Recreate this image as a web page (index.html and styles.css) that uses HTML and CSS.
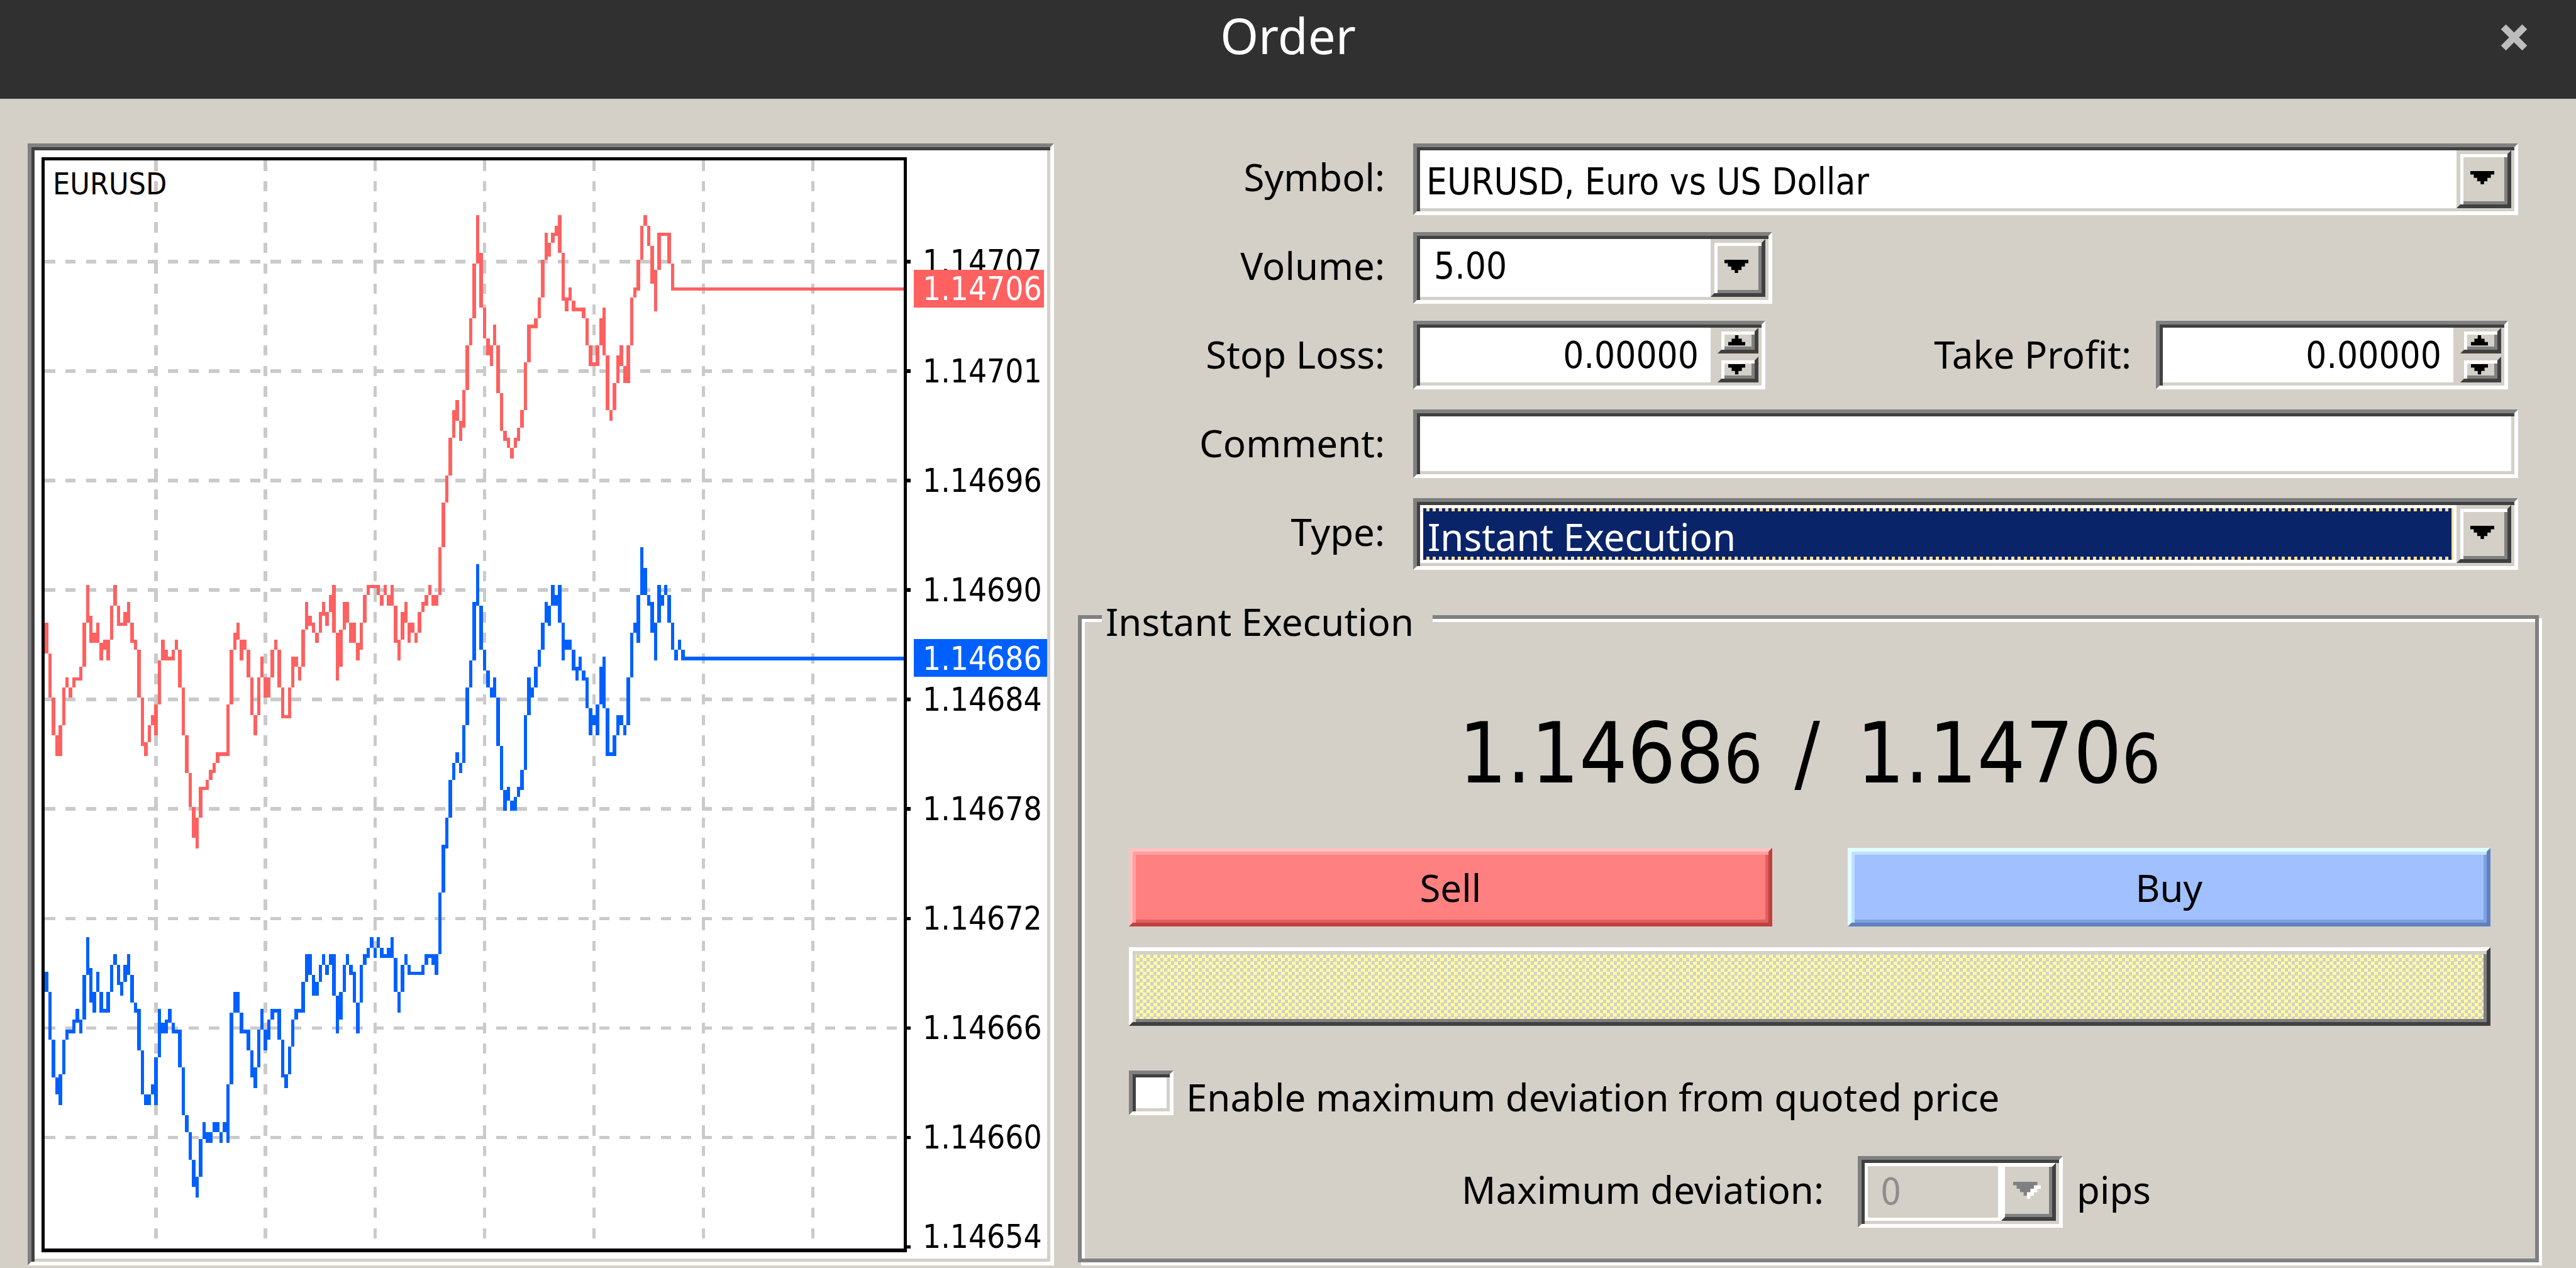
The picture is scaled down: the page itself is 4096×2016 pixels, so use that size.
FILE: index.html
```html
<!DOCTYPE html>
<html lang="en">
<head>
<meta charset="utf-8">
<title>Order</title>
<link rel="stylesheet" href="styles.css">
</head>
<body>
<header class="titlebar">
  <h1 class="title">Order</h1>
  <button class="close" type="button" aria-label="Close">
    <svg viewBox="0 0 8 8" aria-hidden="true"><path d="M1 1L7 7M7 1L1 7"/></svg>
  </button>
</header>
<main class="dialog">
  <section class="chart sunken" aria-label="EURUSD tick chart">
    <svg class="plot" viewBox="0 0 1610 1762">
      <g transform="scale(5.44) translate(-10 -44)" shape-rendering="crispEdges">
        <path class="grid" d="M13 76.500H264M13 108.500H264M13 140.500H264M13 172.500H264M13 204.500H264M13 236.500H264M13 268.500H264M13 300.500H264M13 332.500H264M45.500 47V365M77.500 47V365M109.500 47V365M141.500 47V365M173.500 47V365M205.500 47V365M237.500 47V365"/>
        <path class="ask" id="ask"/>
        <path class="bid" id="bid"/>
        <path class="frame" d="M12.500 46.500H264.500V365.500H12.500ZM265 76.500H266M265 108.500H266M265 140.500H266M265 172.500H266M265 204.500H266M265 236.500H266M265 268.500H266M265 300.500H266M265 332.500H266M265 364.500H266"/>
      </g>
      <text class="symbol" x="29" y="70">EURUSD</text>
      <g class="scale">
        <text x="1412" y="195">1.14707</text>
        <text x="1412" y="369">1.14701</text>
        <text x="1412" y="543">1.14696</text>
        <text x="1412" y="717">1.14690</text>
        <text x="1412" y="891">1.14684</text>
        <text x="1412" y="1065">1.14678</text>
        <text x="1412" y="1239">1.14672</text>
        <text x="1412" y="1413">1.14666</text>
        <text x="1412" y="1587">1.14660</text>
        <text x="1412" y="1745">1.14654</text>
      </g>
      <rect class="ask-tag" x="1398" y="190" width="207" height="60"/>
      <rect class="bid-tag" x="1398" y="777" width="212" height="60"/>
      <g class="tags">
        <text x="1412" y="238">1.14706</text>
        <text x="1412" y="826">1.14686</text>
      </g>
    </svg>
  </section>

  <form class="order">
    <div class="fields">
      <label for="symbol">Symbol:</label>
      <div class="combo sunken">
        <select id="symbol"><option>EURUSD, Euro vs US Dollar</option></select>
        <span class="drop raised"><svg viewBox="0 0 7 4"><path d="M0 0H7V1H6V2H5V3H4V4H3V3H2V2H1V1H0Z"/></svg></span>
      </div>

      <label for="volume">Volume:</label>
      <div class="combo sunken volume">
        <input id="volume" type="text" value="5.00">
        <button class="drop raised" type="button" aria-label="Choose volume"><svg viewBox="0 0 7 4"><path d="M0 0H7V1H6V2H5V3H4V4H3V3H2V2H1V1H0Z"/></svg></button>
      </div>

      <label for="stop">Stop Loss:</label>
      <div class="levels">
        <div class="spin sunken">
          <input id="stop" type="text" value="0.00000">
          <div class="arrows">
            <button class="raised" type="button" aria-label="Raise stop loss"><svg viewBox="0 0 5 3"><path d="M2 0H3V1H4V2H5V3H0V2H1V1H2Z"/></svg></button>
            <button class="raised" type="button" aria-label="Lower stop loss"><svg viewBox="0 0 5 3"><path d="M0 0H5V1H4V2H3V3H2V2H1V1H0Z"/></svg></button>
          </div>
        </div>
        <label for="profit">Take Profit:</label>
        <div class="spin sunken">
          <input id="profit" type="text" value="0.00000">
          <div class="arrows">
            <button class="raised" type="button" aria-label="Raise take profit"><svg viewBox="0 0 5 3"><path d="M2 0H3V1H4V2H5V3H0V2H1V1H2Z"/></svg></button>
            <button class="raised" type="button" aria-label="Lower take profit"><svg viewBox="0 0 5 3"><path d="M0 0H5V1H4V2H3V3H2V2H1V1H0Z"/></svg></button>
          </div>
        </div>
      </div>

      <label for="comment">Comment:</label>
      <div class="comment sunken"><input id="comment" type="text"></div>

      <label for="type">Type:</label>
      <div class="combo sunken active">
        <div class="focus"><select id="type"><option>Instant Execution</option></select></div>
        <span class="drop raised"><svg viewBox="0 0 7 4"><path d="M0 0H7V1H6V2H5V3H4V4H3V3H2V2H1V1H0Z"/></svg></span>
      </div>
    </div>

    <fieldset class="execution">
      <legend>Instant Execution</legend>
      <p class="quote">1.1468<small>6</small> <span class="slash">/</span> 1.1470<small>6</small></p>
      <div class="trade">
        <button class="sell" type="button">Sell</button>
        <button class="buy" type="button">Buy</button>
      </div>
      <div class="notice"></div>
      <div class="check">
        <input id="limit" class="sunken" type="checkbox">
        <label for="limit">Enable maximum deviation from quoted price</label>
      </div>
      <div class="deviation">
        <label for="deviation">Maximum deviation:</label>
        <div class="combo sunken disabled">
          <input id="deviation" type="text" value="0" disabled>
          <button class="drop raised" type="button" aria-label="Choose deviation" disabled><svg viewBox="0 0 8 5"><path class="glint" d="M1 1H8V2H7V3H6V4H5V5H4V4H3V3H2V2H1Z"/><path d="M0 0H7V1H6V2H5V3H4V4H3V3H2V2H1V1H0Z"/></svg></button>
        </div>
        <span>pips</span>
      </div>
    </fieldset>
  </form>
</main>
<script src="chart.js"></script>
</body>
</html>
```
FILE: styles.css
```css
:root {
  --face: #d4d0c8;
  --light: #ffffff;
  --shade: #808080;
  --dark: #404040;
  --label-font: "Noto Sans", sans-serif;
  --value-font: "DejaVu Sans Condensed", "DejaVu Sans", sans-serif;
}

* {
  box-sizing: border-box;
}

body {
  margin: 0;
  min-height: 100vh;
  display: flex;
  flex-direction: column;
  background: var(--face);
  color: #000;
  font: 60px/70px var(--label-font);
}

input,
select,
button {
  margin: 0;
  padding: 0;
  border: 0;
  border-radius: 0;
  background: none;
  color: inherit;
  font: inherit;
  appearance: none;
  outline: 0;
  min-width: 0;
}

/* Title bar */

.titlebar {
  display: grid;
  grid-template-columns: 1fr auto 1fr;
  align-items: start;
  height: 157px;
  padding: 0 76px;
  background: #303030;
}

.title {
  grid-column: 2;
  margin: 0;
  padding-top: 1px;
  color: #fff;
  font: 400 78px/110px var(--label-font);
}

.close {
  justify-self: end;
  margin-top: 37px;
  width: 45px;
  height: 45px;
}

.close svg {
  display: block;
  fill: none;
  stroke: #bdbdbd;
  stroke-width: 2;
}

/* Bevels */

.sunken {
  border: 6px solid;
  border-color: var(--shade) var(--light) var(--light) var(--shade);
  box-shadow: inset 5px 5px 0 var(--dark), inset -5px -5px 0 var(--face);
  padding: 5px;
  background: #fff;
}

.raised {
  border: 6px solid;
  border-color: var(--face) var(--dark) var(--dark) var(--face);
  box-shadow: inset 5px 5px 0 var(--light), inset -5px -5px 0 var(--shade);
  background: var(--face);
}

/* Layout */

.dialog {
  flex: 1;
  display: grid;
  grid-template-columns: 1632fr 2328fr;
  gap: 38px;
  padding: 71px 54px 4px 44px;
}

.order {
  display: flex;
  flex-direction: column;
}

/* Chart */

.chart {
  min-width: 0;
  font-family: var(--value-font);
  font-stretch: condensed;
}

.plot {
  display: block;
  width: 100%;
}

.plot path {
  fill: none;
  stroke-width: 1;
}

.plot .grid {
  stroke: #cacaca;
  stroke-dasharray: 3 3;
}

.plot .frame {
  stroke: #000;
}

.plot .ask {
  stroke: #ff6060;
}

.plot .bid {
  stroke: #0060ff;
}

.ask-tag {
  fill: #ff6060;
}

.bid-tag {
  fill: #0060ff;
}

.symbol {
  font-size: 48px;
}

.scale,
.tags {
  font-size: 51px;
}

.tags {
  fill: #fff;
}

/* Order fields */

.fields {
  display: grid;
  grid-template-columns: 488px 1fr;
  column-gap: 45px;
  row-gap: 27px;
  grid-auto-rows: 114px;
  align-items: start;
  padding-right: 38px;
}

.fields label {
  padding-top: 18px;
  text-align: right;
}

.combo {
  display: flex;
  height: 114px;
}

.combo select,
.combo input,
.spin input,
.comment input {
  flex: 1;
  font-family: var(--value-font);
  font-size: 58px;
  font-stretch: condensed;
}

.combo select {
  padding: 8px 0 0 10px;
}

.drop {
  flex: none;
  display: grid;
  place-content: center;
  width: 87px;
  padding: 0 5px 5px 0;
}

.drop svg {
  display: block;
  width: 38px;
}

.volume {
  width: 571px;
}

.combo input {
  padding: 0 0 7px 22px;
}

.levels {
  display: flex;
  padding-right: 16px;
}

.levels label {
  margin-left: auto;
  margin-right: 39px;
}

.spin {
  display: flex;
  width: 560px;
  height: 109px;
}

.spin input {
  padding-right: 19px;
  text-align: right;
}

.arrows {
  flex: none;
  display: flex;
  flex-direction: column;
  gap: 5px;
  width: 76px;
  padding: 0 0 0 11px;
  background: var(--face);
}

.arrows button {
  flex: 1;
  display: grid;
  place-content: center;
  padding-right: 5px;
}

.arrows svg {
  display: block;
  width: 27px;
}

.comment {
  display: flex;
  height: 109px;
}

.focus {
  flex: 1;
  display: flex;
  margin: 5px;
  padding: 5px;
  background: repeating-linear-gradient(90deg, #0a246a 0 5px, #f5db95 5px 10px);
}

.focus select {
  padding: 5px 0 0 2px;
  background: #0a246a;
  color: #fff;
  font-family: var(--label-font);
  font-size: 60px;
}

/* Execution group */

.execution {
  flex: 1;
  min-width: 0;
  margin: 33px 5px 5px 0;
  padding: 0 71px 40px 75px;
  border: 6px solid var(--shade);
  box-shadow: inset 5px 5px 0 var(--light), 5px 5px 0 var(--light);
}

.execution legend {
  margin-left: -43px;
  padding: 14px 30px 0 6px;
  background: var(--face);
}

.quote {
  margin: 95px 0 70px;
  font-family: var(--value-font);
  font-size: 134px;
  font-stretch: condensed;
  line-height: 160px;
  text-align: center;
}

.quote small {
  font-size: 108px;
  line-height: 1;
}

.slash {
  margin: 0 20px 0 12px;
}

.trade {
  display: grid;
  grid-template-columns: 1fr 1fr;
  gap: 120px;
}

.trade button {
  height: 125px;
  border-width: 6px;
  border-style: solid;
}

.sell {
  background: #ff8080;
  border-color: #ffc0c0 #c04040 #c04040 #ffc0c0;
  box-shadow: inset 5px 5px 0 #ffa0a0, inset -5px -5px 0 #e06060;
}

.buy {
  background: #a0c0ff;
  border-color: #e0ffff #6080c0 #6080c0 #e0ffff;
  box-shadow: inset 5px 5px 0 #c0e0ff, inset -5px -5px 0 #80a0e0;
}

.notice {
  height: 125px;
  margin-top: 33px;
  border: 6px solid;
  border-color: var(--light) var(--dark) var(--dark) var(--light);
  box-shadow: inset 5px 5px 0 var(--face), inset -5px -5px 0 var(--shade);
  background: conic-gradient(#ffffa0 25%, var(--face) 0 50%, #ffffa0 0 75%, var(--face) 0) 0 0 / 11px 11px;
}

.check {
  display: flex;
  align-items: start;
  gap: 20px;
  margin-top: 71px;
}

.check input {
  width: 71px;
  height: 71px;
}

.check label {
  padding-top: 7px;
}

.deviation {
  display: flex;
  align-items: start;
  margin-top: 59px;
}

.deviation label,
.deviation span {
  padding-top: 18px;
}

.deviation label {
  width: 1105px;
  text-align: right;
}

.deviation .combo {
  width: 326px;
  margin: 0 22px 0 54px;
}

.disabled input {
  border: 5px solid #fff;
  background: var(--face);
  color: #908c8c;
  padding: 0 0 0 20px;
}

.disabled .drop {
  border-color: var(--light) var(--dark) var(--dark) var(--light);
  box-shadow: inset -5px -5px 0 var(--shade);
}

.disabled svg {
  width: 44px;
  fill: var(--shade);
}

.disabled .glint {
  fill: #fff;
}
```
FILE: chart.js
```js
// One "high-low" pair per tick column, from the left edge of the plot.
const ask = "182-191 191-204 204-215 215-221 212-221 201-212 198-201 201-204 198-201 198-199 195-199 182-195 171-182 180-188 185-188 182-188 188-193 187-190 187-193 177-187 171-177 177-183 182-183 179-183 176-182 182-188 187-190 190-204 204-218 217-221 212-217 209-212 206-215 193-206 187-193 190-193 192-193 190-193 187-190 190-201 201-215 215-226 226-236 236-245 239-248 230-239 230-231 228-231 225-228 223-226 220-223 220-221 220-221 206-221 190-206 185-190 182-187 187-193 187-190 190-198 198-209 209-215 198-209 192-198 198-204 198-204 190-198 187-190 190-201 201-210 209-210 201-210 192-201 192-195 195-199 184-195 176-184 180-183 182-185 185-188 179-185 176-180 179-183 174-179 171-185 185-199 184-195 176-184 176-182 182-188 182-188 188-193 182-190 174-182 171-174 171-172 171-172 171-174 174-177 171-174 174-177 171-177 177-188 187-193 179-187 176-182 182-188 182-185 185-188 179-185 176-179 174-177 171-174 174-177 174-177 160-174 147-160 139-147 128-139 120-128 117-123 123-129 114-125 101-114 93-101 77-93 63-77 74-90 90-99 99-104 101-107 95-101 101-115 115-126 126-129 128-131 131-134 128-131 125-129 120-125 106-120 95-106 95-96 93-96 87-93 76-87 68-76 71-75 68-71 66-69 63-74 74-88 87-91 84-88 88-91 90-91 90-91 90-93 93-101 101-107 106-107 101-107 93-101 90-104 104-120 120-123 112-120 104-112 101-107 107-112 101-112 87-101 84-87 76-85 66-76 63-66 66-72 72-83 79-91 68-79 68-69 68-69 68-77 77-85";
const bid = "284-290 290-304 304-315 315-320 314-323 304-314 301-304 301-302 298-302 295-299 298-302 285-298 274-285 283-293 290-296 284-290 290-296 295-296 290-296 282-290 279-282 282-288 287-291 282-287 279-285 285-293 293-296 295-307 307-320 320-323 320-323 317-320 309-323 295-309 299-302 298-302 295-299 299-302 301-302 301-312 312-326 326-331 331-339 339-347 344-350 333-344 328-333 331-334 331-334 328-331 328-331 331-334 328-331 317-334 296-317 290-296 290-296 296-302 301-302 301-307 307-315 312-318 301-312 295-301 301-307 298-304 295-298 295-296 295-304 304-315 314-318 306-314 298-306 295-298 295-296 287-296 279-287 279-285 285-291 287-291 282-287 279-282 282-285 279-282 279-291 291-302 290-298 282-290 279-282 282-285 284-293 293-302 282-293 279-282 277-280 274-277 277-280 274-277 277-280 279-280 277-280 274-280 280-290 290-296 282-290 279-282 282-285 284-285 284-285 284-285 282-285 279-282 279-280 279-282 279-285 261-279 247-261 239-248 228-239 223-228 220-223 223-226 212-223 201-212 193-201 176-193 165-177 177-190 190-196 196-201 201-204 198-204 204-218 218-231 231-237 230-234 234-237 233-237 230-233 225-231 209-225 198-209 201-204 195-201 190-195 182-190 176-182 177-183 171-177 174-177 171-182 182-193 187-190 187-190 190-196 195-199 192-196 196-199 198-207 207-215 209-212 206-215 195-206 192-207 207-221 220-221 215-221 209-215 209-212 212-215 198-212 185-198 182-185 174-188 160-174 166-174 174-177 176-185 182-193 171-182 174-177 171-174 174-182 182-190 190-193 187-190 190-193";

const LEFT = 13;
const RIGHT = 264;

function draw(id, ticks, last) {
  const columns = ticks.split(" ");
  const bars = columns.map((pair, i) => {
    const [high, low] = pair.split("-");
    return `M${LEFT + i + 0.5} ${high}V${low}`;
  });
  bars.push(`M${LEFT + columns.length} ${last + 0.5}H${RIGHT}`);
  document.getElementById(id).setAttribute("d", bars.join(""));
}

draw("ask", ask, 84);
draw("bid", bid, 192);
```
